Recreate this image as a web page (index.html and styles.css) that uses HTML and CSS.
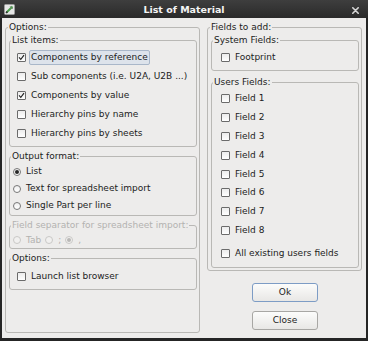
FILE: index.html
```html
<!DOCTYPE html>
<html>
<head>
<meta charset="utf-8">
<title>List of Material</title>
<link rel="stylesheet" href="styles.css">
</head>
<body>
<div class="window">
  <div class="titlebar">
    <svg class="app-icon" viewBox="0 0 11 11"><rect x="0.5" y="0.5" width="10" height="10" rx="1" fill="#e6e6e6" stroke="#9c9c9c"/><path d="M2.5 8.5 L8.5 2.5" stroke="#4aa04a" stroke-width="2"/><path d="M2 9 L3.4 7.6" stroke="#2e2e2e" stroke-width="1.6"/><path d="M6 2.2 L8.8 5" stroke="#6a6a6a" stroke-width="0.8"/></svg>
    <span class="title">List of Material</span>
    <svg class="close" viewBox="0 0 7 7"><path d="M0.8 0.8 L6.2 6.2 M6.2 0.8 L0.8 6.2" stroke="#d6d6d6" stroke-width="1.6" stroke-linecap="round"/></svg>
  </div>
  <div class="content">
    <fieldset class="group outer left-col">
      <legend>Options:</legend>
      <fieldset class="group inner g-list">
        <legend>List items:</legend>
        <div class="row cbrow-l"><span class="cb"><svg viewBox="0 0 7 7"><path d="M1 3.4 L2.8 5.4 L6 1.2" fill="none" stroke="#222" stroke-width="1.1"/></svg></span><span class="lbl focus">Components by reference</span></div>
        <div class="row cbrow-l"><span class="cb"></span><span class="lbl">Sub components (i.e. U2A, U2B ...)</span></div>
        <div class="row cbrow-l"><span class="cb"><svg viewBox="0 0 7 7"><path d="M1 3.4 L2.8 5.4 L6 1.2" fill="none" stroke="#222" stroke-width="1.1"/></svg></span><span class="lbl">Components by value</span></div>
        <div class="row cbrow-l"><span class="cb"></span><span class="lbl">Hierarchy pins by name</span></div>
        <div class="row cbrow-l"><span class="cb"></span><span class="lbl">Hierarchy pins by sheets</span></div>
      </fieldset>
      <fieldset class="group inner g-output">
        <legend>Output format:</legend>
        <div class="row rbrow"><span class="rb on"></span><span class="lbl">List</span></div>
        <div class="row rbrow"><span class="rb"></span><span class="lbl">Text for spreadsheet import</span></div>
        <div class="row rbrow"><span class="rb"></span><span class="lbl">Single Part per line</span></div>
      </fieldset>
      <fieldset class="group inner g-sep disabled">
        <legend>Field separator for spreadsheet import:</legend>
        <div class="row rbrow seprow">
          <span class="rb"></span><span class="lbl">Tab</span>
          <span class="rb"></span><span class="lbl">;</span>
          <span class="rb on"></span><span class="lbl">,</span>
        </div>
      </fieldset>
      <fieldset class="group inner g-opts">
        <legend>Options:</legend>
        <div class="row cbrow-l"><span class="cb"></span><span class="lbl">Launch list browser</span></div>
      </fieldset>
    </fieldset>
    <div class="right-col">
      <fieldset class="group outer g-fields">
        <legend>Fields to add:</legend>
        <fieldset class="group inner g-system">
          <legend>System Fields:</legend>
          <div class="row cbrow-r"><span class="cb"></span><span class="lbl">Footprint</span></div>
        </fieldset>
        <fieldset class="group inner g-users">
          <legend>Users Fields:</legend>
          <div class="row cbrow-r field"><span class="cb"></span><span class="lbl">Field 1</span></div>
          <div class="row cbrow-r field"><span class="cb"></span><span class="lbl">Field 2</span></div>
          <div class="row cbrow-r field"><span class="cb"></span><span class="lbl">Field 3</span></div>
          <div class="row cbrow-r field"><span class="cb"></span><span class="lbl">Field 4</span></div>
          <div class="row cbrow-r field"><span class="cb"></span><span class="lbl">Field 5</span></div>
          <div class="row cbrow-r field"><span class="cb"></span><span class="lbl">Field 6</span></div>
          <div class="row cbrow-r field"><span class="cb"></span><span class="lbl">Field 7</span></div>
          <div class="row cbrow-r field"><span class="cb"></span><span class="lbl">Field 8</span></div>
          <div class="row cbrow-r all"><span class="cb"></span><span class="lbl">All existing users fields</span></div>
        </fieldset>
      </fieldset>
      <div class="buttons">
        <div class="btn default">Ok</div>
        <div class="btn">Close</div>
      </div>
    </div>
  </div>
</div>
</body>
</html>
```
FILE: styles.css
```css
* { box-sizing: border-box; }
html, body { margin: 0; padding: 0; }
body {
  width: 368px;
  height: 341px;
  overflow: hidden;
  background: #222;
  font-family: "DejaVu Sans", sans-serif;
  font-size: 9px;
  color: #1c1c1c;
}
.window {
  width: 368px;
  height: 341px;
  display: flex;
  flex-direction: column;
  background: #252525;
}
.titlebar {
  height: 18px;
  flex: none;
  display: grid;
  grid-template-columns: 1fr auto 1fr;
  align-items: center;
  background: linear-gradient(#3e3e3e, #2a2a2a);
  color: #f4f4f4;
}
.app-icon {
  justify-self: start;
  margin-left: 4px;
  width: 11px;
  height: 11px;
}
.title {
  font-weight: bold;
  font-size: 9.5px;
  line-height: 17px;
  padding-top: 1px;
  white-space: nowrap;
}
.close {
  justify-self: end;
  margin-right: 9px;
  margin-top: 2px;
  width: 7px;
  height: 7px;
}
.content {
  flex: 1;
  margin: 0 2px 3px 2px;
  background: #edeceb;
  display: flex;
  gap: 7px;
  padding: 4px 4px 5px 3px;
}
.group {
  margin: 0;
  min-width: 0;
  border: 1px solid #b9b8b5;
  border-radius: 3px;
  padding: 0 2px;
}
.group > legend {
  padding: 0 1px;
  line-height: 11px;
  font-size: 9px;
  white-space: nowrap;
}
.outer { padding-top: 2px; }
.left-col { width: 195px; flex: none; }
.right-col { width: 155px; flex: none; display: flex; flex-direction: column; }
.inner { margin-left: 1px; padding-left: 1px; padding-right: 1px; }
.g-list { padding-top: 2px; padding-bottom: 3px; }
.g-output { margin-top: 4px; padding-top: 1px; padding-bottom: 1px; }
.g-output .row { height: 17px; }
.g-sep { margin-top: 4px; padding-top: 2px; padding-bottom: 1px; }
.g-sep .row { height: 14px; }
.g-opts { margin-top: 4px; padding-top: 3px; padding-bottom: 3px; }
.g-fields { padding-bottom: 2px; }
.g-system { padding-top: 2px; padding-bottom: 3px; }
.g-users { margin-top: 6px; padding-top: 1px; padding-bottom: 4px; }
.g-users .field { height: 18.9px; }
.g-users .all { margin-top: 3.6px; }

.row {
  display: flex;
  align-items: center;
  height: 19px;
}
.cbrow-l { padding-left: 6px; }
.cbrow-r { padding-left: 8px; }
.rbrow { padding-left: 2px; }
.lbl {
  margin-left: 3px;
  padding: 1px;
  border: 1px solid transparent;
  line-height: 11px;
  white-space: nowrap;
}
.lbl.focus {
  background: #dde3eb;
  border-color: #a9b7c9;
  border-radius: 2px;
}
.cb {
  flex: none;
  width: 9px;
  height: 9px;
  border: 1px solid #6b6b6b;
  border-radius: 1px;
  background: linear-gradient(#ececec, #ffffff);
  display: flex;
}
.cb svg { width: 7px; height: 7px; }
.rb {
  flex: none;
  width: 8px;
  height: 8px;
  border: 1px solid #777;
  border-radius: 50%;
  background: linear-gradient(#efefef, #ffffff);
  display: flex;
  align-items: center;
  justify-content: center;
}
.rb.on::after {
  content: "";
  width: 4px;
  height: 4px;
  border-radius: 50%;
  background: #262626;
}
.seprow .lbl + .rb { margin-left: 2px; }
.disabled > legend,
.disabled .lbl { color: #b3b2b0; }
.disabled .rb { border-color: #c9c8c6; background: #f1f0ef; }
.disabled .rb.on::after { background: #b9b8b6; }

.buttons {
  display: flex;
  flex-direction: column;
  align-items: center;
  gap: 9px;
  margin-top: 12.5px;
  padding-left: 1px;
}
.btn {
  width: 66px;
  height: 19px;
  border: 1px solid #a8a7a4;
  border-radius: 3px;
  background: linear-gradient(#fcfcfb, #e8e7e5);
  display: flex;
  align-items: center;
  justify-content: center;
  line-height: 11px;
}
.btn.default { border-color: #7d9cc5; }
```
